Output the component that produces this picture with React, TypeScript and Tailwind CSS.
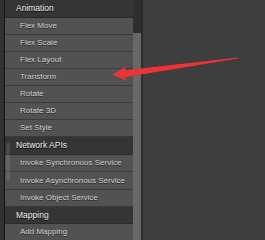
const rows: { label: string; header?: boolean; h: string }[] = [
  { label: "Animation", header: true, h: "h-[18px]" },
  { label: "Flex Move", h: "h-[17px]" },
  { label: "Flex Scale", h: "h-[17px]" },
  { label: "Flex Layout", h: "h-[17px]" },
  { label: "Transform", h: "h-[17px]" },
  { label: "Rotate", h: "h-[17px]" },
  { label: "Rotate 3D", h: "h-[17px]" },
  { label: "Set Style", h: "h-[17px]" },
  { label: "Network APIs", header: true, h: "h-[18px]" },
  { label: "Invoke Synchronous Service", h: "h-[17px]" },
  { label: "Invoke Asynchronous Service", h: "h-[18px]" },
  { label: "Invoke Object Service", h: "h-[17px]" },
  { label: "Mapping", header: true, h: "h-[17px]" },
  { label: "Add Mapping", h: "h-[17px]" },
];

export default function App() {
  return (
    <div className="relative flex h-[240px] w-[265px] overflow-hidden bg-[#3e3e3e] font-['Liberation_Sans',Arial,sans-serif]">
      {/* left edge */}
      <div className="w-[4px] shrink-0 bg-[#313131]" />
      <div className="w-px shrink-0 bg-[#151515]" />

      {/* menu list */}
      <div className="flex w-[128px] shrink-0 flex-col">
        {rows.map((r) =>
          r.header ? (
            <div
              key={r.label}
              className={`${r.h} flex shrink-0 items-center border-b border-[#2a2a2a] bg-[#353535] pl-[11px] text-[8.5px] text-[#f2f2f2] [text-shadow:0_1px_0_#000]`}
            >
              {r.label}
            </div>
          ) : (
            <div
              key={r.label}
              className={`${r.h} flex shrink-0 items-center border-b border-[#3a3a3a] bg-[#525252] pl-[15px] text-[8px] text-[#cfd0d6] [text-shadow:0_1px_0_#2a2a2a]`}
            >
              {r.label}
            </div>
          )
        )}
      </div>

      {/* scrollbar */}
      <div className="flex w-[8px] shrink-0 flex-col">
        <div className="h-[33px] bg-[#2f2f2f]" />
        <div className="flex-1 bg-[#686868]" />
      </div>
      <div className="w-[2px] shrink-0 bg-[#2c2c2c]" />
      <div className="flex-1 bg-[#3e3e3e]" />

      {/* faint bar over left edge */}
      <div className="absolute left-[6px] top-[143px] h-[37px] w-[4px] bg-white/10" />

      {/* red arrow annotation */}
      <svg className="pointer-events-none absolute left-0 top-0" width="265" height="240">
        <polygon points="123,70.5 238,57.6 238,58.6 123,77.5" fill="#ee3336" />
        <polygon points="112.5,74.5 126,66.5 123.5,73.5 127,81" fill="#ee3336" />
      </svg>
    </div>
  );
}
